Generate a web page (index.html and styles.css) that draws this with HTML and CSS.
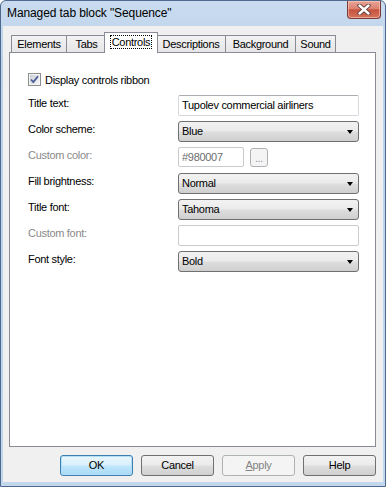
FILE: index.html
```html
<!DOCTYPE html>
<html>
<head>
    <meta charset="utf-8">
    <title>Managed tab block "Sequence"</title>
    <link rel="stylesheet" href="styles.css">
</head>
<body>
    <div class="window">
        <div class="titlebar">
            <span class="title">Managed tab block "Sequence"</span>
            <div class="close-btn">
                <svg width="14" height="11" viewBox="0 0 14 11">
                    <path d="M2.5 1.5 L11.5 9.5 M11.5 1.5 L2.5 9.5" stroke="#5a3a3a" stroke-width="4.2" stroke-linecap="round" fill="none"/>
                    <path d="M2.5 1.5 L11.5 9.5 M11.5 1.5 L2.5 9.5" stroke="#ffffff" stroke-width="2.4" stroke-linecap="round" fill="none"/>
                </svg>
            </div>
        </div>
        <div class="client">
            <div class="tabs">
                <div class="tab" style="width: 56px">Elements</div>
                <div class="tab" style="width: 41px">Tabs</div>
                <div class="tab active" style="width: 54px"><span class="focus">Controls</span></div>
                <div class="tab" style="width: 70px">Descriptions</div>
                <div class="tab" style="width: 71px">Background</div>
                <div class="tab" style="width: 41px">Sound</div>
            </div>
            <div class="panel">
                <div class="check-row">
                    <span class="checkbox">
                        <svg width="13" height="13" viewBox="0 0 13 13">
                            <defs>
                                <linearGradient id="cb" x1="0" y1="0" x2="1" y2="1">
                                    <stop offset="0" stop-color="#cbcfd5"/>
                                    <stop offset="1" stop-color="#f6f6f6"/>
                                </linearGradient>
                            </defs>
                            <rect x="0.5" y="0.5" width="12" height="12" fill="#f4f4f4" stroke="#8e8f8f"/>
                            <rect x="2" y="2" width="9" height="9" fill="url(#cb)"/>
                            <path d="M3 6.5 L5.3 9 L10 3.2" stroke="#4c5c98" stroke-width="1.8" fill="none"/>
                        </svg>
                    </span>
                    Display controls ribbon
                </div>
                <div class="form">
                    <div class="label">Title text:</div>
                    <div class="textbox">Tupolev commercial airliners</div>

                    <div class="label">Color scheme:</div>
                    <div class="select">Blue<span class="arrow"></span></div>

                    <div class="label disabled">Custom color:</div>
                    <div class="color-row">
                        <div class="textbox disabled small">#980007</div>
                        <div class="dots-btn">...</div>
                    </div>

                    <div class="label">Fill brightness:</div>
                    <div class="select">Normal<span class="arrow"></span></div>

                    <div class="label">Title font:</div>
                    <div class="select">Tahoma<span class="arrow"></span></div>

                    <div class="label disabled">Custom font:</div>
                    <div class="textbox disabled"></div>

                    <div class="label">Font style:</div>
                    <div class="select">Bold<span class="arrow"></span></div>
                </div>
            </div>
            <div class="buttons">
                <div class="button default">OK</div>
                <div class="button">Cancel</div>
                <div class="button disabled"><u>A</u>pply</div>
                <div class="button">Help</div>
            </div>
        </div>
    </div>
</body>
</html>
```
FILE: styles.css
```css
body {
    margin: 0;
    background-color: #ffffff;
    font-family: "Liberation Sans", Arial, sans-serif;
    font-size: 11px;
    letter-spacing: -0.3px;
    color: #000;
}
.window {
    width: 386px;
    height: 487px;
    box-sizing: border-box;
    border: 1px solid #4d6a8e;
    border-radius: 6px 6px 0 0;
    background: linear-gradient(#c9dbef, #bcd2ea 60px, #c2d6ec);
    padding: 0 2px 4px 2px;
    display: flex;
    flex-direction: column;
}
.titlebar {
    height: 25px;
    display: flex;
    justify-content: space-between;
    align-items: center;
    padding-left: 4px;
}
.title {
    font-size: 12px;
    line-height: 15px;
    letter-spacing: -0.1px;
}
.close-btn {
    align-self: flex-start;
    width: 32px;
    height: 17px;
    margin-right: 2px;
    border: 1px solid #7a3a36;
    border-top: none;
    border-radius: 0 0 4px 4px;
    background: linear-gradient(#e8a596 0%, #dc8271 45%, #c7533f 52%, #d5735c 100%);
    box-shadow: inset 0 0 0 1px rgba(255, 220, 210, 0.5);
    display: flex;
    justify-content: center;
    align-items: center;
}
.client {
    flex: 1;
    background-color: #f0f0f0;
    padding: 6px 7px 0 6px;
    display: flex;
    flex-direction: column;
}
.tabs {
    display: flex;
    align-items: flex-end;
    height: 20px;
    padding-left: 2px;
    position: relative;
    z-index: 1;
}
.tab {
    box-sizing: border-box;
    height: 17px;
    border: 1px solid #898c95;
    border-bottom: none;
    background: linear-gradient(#f3f3f3, #e6e6e6);
    text-align: center;
    line-height: 16px;
    margin-left: -1px;
}
.tab:first-child {
    margin-left: 0;
}
.tab.active {
    height: 21px;
    margin: 0 -2px -1px -3px;
    background: #ffffff;
    line-height: 15px;
    padding-top: 2px;
    position: relative;
}
.tab.active + .tab {
    margin-left: 0;
}
.focus {
    border: 1px dotted #000;
    padding: 0 1px;
}
.panel {
    width: 367px;
    height: 395px;
    box-sizing: border-box;
    border: 1px solid #898c95;
    background-color: #ffffff;
    padding: 20px 0 0 18px;
}
.check-row {
    display: flex;
    align-items: center;
    gap: 4px;
    height: 13px;
    margin-bottom: 9px;
}
.checkbox {
    width: 13px;
    height: 13px;
    display: flex;
}
.form {
    display: grid;
    grid-template-columns: 150px 181px;
    grid-auto-rows: 21px;
    row-gap: 5px;
}
.label {
    line-height: 14px;
    padding-top: 1px;
}
.label.disabled {
    color: #8a8a8a;
}
.textbox {
    box-sizing: border-box;
    height: 21px;
    border: 1px solid #d5d8dd;
    border-top-color: #abadb3;
    border-radius: 2px;
    background-color: #ffffff;
    padding-left: 3px;
    line-height: 19px;
}
.textbox.disabled {
    color: #6d6d6d;
    border-color: #c8cacd;
}
.textbox.small {
    width: 66px;
    height: 20px;
    line-height: 18px;
}
.color-row {
    display: flex;
    align-items: flex-start;
    gap: 6px;
}
.dots-btn {
    box-sizing: border-box;
    width: 18px;
    height: 19px;
    margin-top: 1px;
    border: 1px solid #adb2b5;
    border-radius: 3px;
    background-color: #f4f4f4;
    color: #8a8a8a;
    text-align: center;
    line-height: 19px;
    font-size: 10px;
}
.select {
    box-sizing: border-box;
    height: 21px;
    border: 1px solid #707070;
    border-radius: 3px;
    background: linear-gradient(#f2f2f2 0%, #ebebeb 45%, #dddddd 55%, #cfcfcf 100%);
    padding-left: 3px;
    line-height: 19px;
    display: flex;
    justify-content: space-between;
    align-items: center;
}
.arrow {
    width: 0;
    height: 0;
    border-left: 3.5px solid transparent;
    border-right: 3.5px solid transparent;
    border-top: 4px solid #000;
    margin-right: 5px;
}
.buttons {
    display: flex;
    justify-content: flex-end;
    gap: 8px;
    margin-top: 8px;
}
.button {
    box-sizing: border-box;
    width: 73px;
    height: 21px;
    border: 1px solid #707070;
    border-radius: 3px;
    background: linear-gradient(#f2f2f2 0%, #ebebeb 45%, #dddddd 55%, #cfcfcf 100%);
    text-align: center;
    line-height: 19px;
}
.button.default {
    border-color: #3c7fb1;
    background: linear-gradient(#eaf6fd 0%, #d9f0fc 45%, #bee6fd 55%, #a7d9f5 100%);
    box-shadow: inset 0 0 0 1px #b3dff7;
}
.button.disabled {
    border-color: #adb2b5;
    background: #f4f4f4;
    color: #838383;
}
```
